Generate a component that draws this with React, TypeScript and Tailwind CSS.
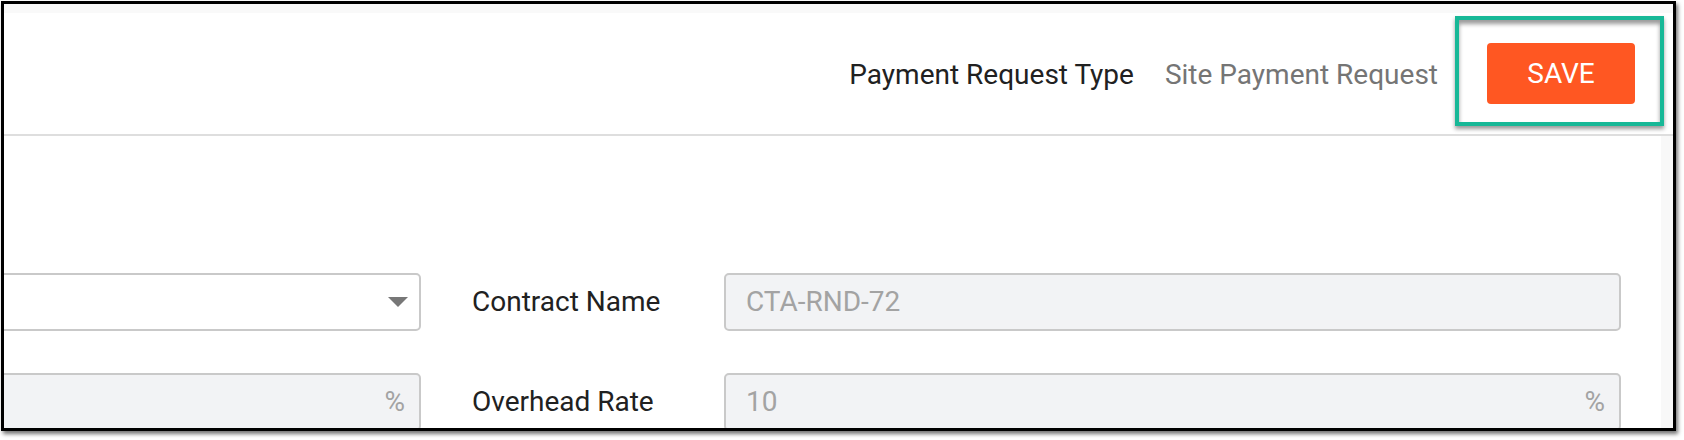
import React from "react";

const font = { fontFamily: "Roboto, 'Noto Sans', Arial, sans-serif" };

export default function App() {
  return (
    <div className="w-[1684px] h-[440px] bg-white pl-[1px] pt-[1px]" style={font}>
      <div className="w-[1675px] h-[430px] border-[3px] border-black shadow-[2px_3px_4px_rgba(0,0,0,0.55)] overflow-hidden flex flex-col bg-white">
        <div className="h-[9px] bg-[#f9f9f9] shrink-0" />
        <div className="h-[121px] shrink-0 flex items-center justify-end border-b-2 border-[#dedede] box-content">
          <span className="text-[28px] leading-none text-[#212121] mt-[2px]">Payment Request Type</span>
          <span className="text-[28px] leading-none text-[#757575] ml-[31px] mt-[2px]">Site Payment Request</span>
          <div className="self-start mt-[3px] ml-[17px] mr-[9px] w-[209px] h-[110px] border-[4px] border-[#17b897] shadow-[0_3px_4px_rgba(0,0,0,0.4),inset_0_4px_4px_rgba(0,0,0,0.4)] pl-[28px] pt-[23px]">
            <button className="w-[148px] h-[61px] bg-[#ff5722] rounded-[4px] text-white text-[28px] leading-none">SAVE</button>
          </div>
        </div>
        <div className="flex-1 flex">
          <div className="flex-1 flex flex-col pt-[137px] gap-[42px]">
            <div className="flex items-center h-[58px]">
              <div className="w-[500px] -ml-[83px] h-[58px] border-2 border-[#c9c9c9] rounded-[5px] bg-white flex items-center justify-end pr-[11px]">
                <svg width="20" height="10" viewBox="0 0 20 10"><path d="M0 0 L20 0 L10 10 Z" fill="#777" /></svg>
              </div>
              <div className="ml-[51px] w-[252px] text-[28px] leading-none text-[#212121]">Contract Name</div>
              <div className="w-[897px] h-[58px] border-2 border-[#c9c9c9] rounded-[5px] bg-[#f2f3f5] flex items-center pl-[20px] text-[28px] leading-none text-[#a3a3a3]">CTA-RND-72</div>
            </div>
            <div className="flex items-center h-[58px]">
              <div className="w-[500px] -ml-[83px] h-[58px] border-2 border-[#c9c9c9] rounded-[5px] bg-[#f2f3f5] flex items-center justify-end pr-[14px] text-[28px] leading-none text-[#a3a3a3]">%</div>
              <div className="ml-[51px] w-[252px] text-[28px] leading-none text-[#212121]">Overhead Rate</div>
              <div className="w-[897px] h-[58px] border-2 border-[#c9c9c9] rounded-[5px] bg-[#f2f3f5] flex items-center justify-between pl-[20px] pr-[14px] text-[28px] leading-none text-[#a3a3a3]">
                <span>10</span>
                <span>%</span>
              </div>
            </div>
          </div>
          <div className="w-[12px] bg-[#f8f8f8]" />
        </div>
      </div>
    </div>
  );
}
